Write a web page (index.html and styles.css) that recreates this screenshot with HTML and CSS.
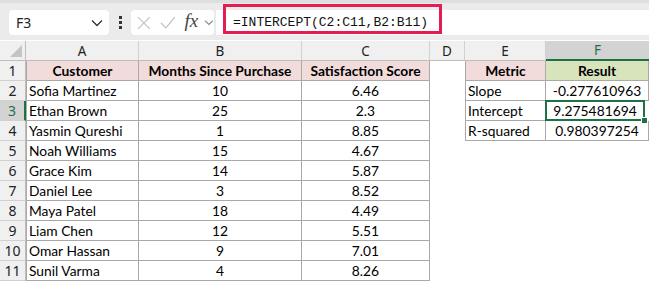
FILE: index.html
```html
<!DOCTYPE html>
<html lang="en">
<head>
    <meta charset="UTF-8">
    <title>INTERCEPT</title>
    <link rel="stylesheet" href="styles.css">
</head>
<body>
    <div class="toolbar">
        <div class="namebox">
            <span>F3</span>
            <svg class="chev" width="12" height="8" viewBox="0 0 12 8"><path d="M1 1.5 L6 6.5 L11 1.5" fill="none" stroke="#333" stroke-width="1.3"/></svg>
        </div>
        <div class="dots"><i></i><i></i><i></i></div>
        <div class="fxbox">
            <svg width="14" height="14" viewBox="0 0 14 14"><path d="M1 1 L13 13 M13 1 L1 13" stroke="#c2c2c2" stroke-width="1.2"/></svg>
            <svg width="16" height="14" viewBox="0 0 16 14"><path d="M1 7 L6 12 L15 1" fill="none" stroke="#c2c2c2" stroke-width="1.2"/></svg>
            <span class="fx">fx</span>
            <svg class="small" width="10" height="7" viewBox="0 0 10 7"><path d="M1 1.5 L5 5.5 L9 1.5" fill="none" stroke="#888" stroke-width="1.1"/></svg>
        </div>
        <div class="formula">
            <span>=INTERCEPT(C2:C11,B2:B11)</span>
            <div class="mark"></div>
        </div>
    </div>

    <div class="sheet">
        <div class="corner"><div class="tri"></div></div>
        <div class="colhead">A</div>
        <div class="colhead">B</div>
        <div class="colhead">C</div>
        <div class="colhead">D</div>
        <div class="colhead">E</div>
        <div class="colhead active">F</div>

        <div class="rowhead">1</div>
        <div class="cell head first">Customer</div>
        <div class="cell head">Months Since Purchase</div>
        <div class="cell head">Satisfaction Score</div>
        <div class="cell blank"></div>
        <div class="cell head first">Metric</div>
        <div class="cell head green">Result</div>

        <div class="rowhead">2</div>
        <div class="cell first left">Sofia Martinez</div>
        <div class="cell">10</div>
        <div class="cell">6.46</div>
        <div class="cell blank"></div>
        <div class="cell first left">Slope</div>
        <div class="cell">-0.277610963</div>

        <div class="rowhead active">3</div>
        <div class="cell first left">Ethan Brown</div>
        <div class="cell">25</div>
        <div class="cell">2.3</div>
        <div class="cell blank"></div>
        <div class="cell first left">Intercept</div>
        <div class="cell selected">9.275481694<span class="handle"></span></div>

        <div class="rowhead">4</div>
        <div class="cell first left">Yasmin Qureshi</div>
        <div class="cell">1</div>
        <div class="cell">8.85</div>
        <div class="cell blank"></div>
        <div class="cell first left">R-squared</div>
        <div class="cell">0.980397254</div>

        <div class="rowhead">5</div>
        <div class="cell first left">Noah Williams</div>
        <div class="cell">15</div>
        <div class="cell">4.67</div>
        <div class="cell blank wide"></div>

        <div class="rowhead">6</div>
        <div class="cell first left">Grace Kim</div>
        <div class="cell">14</div>
        <div class="cell">5.87</div>
        <div class="cell blank wide"></div>

        <div class="rowhead">7</div>
        <div class="cell first left">Daniel Lee</div>
        <div class="cell">3</div>
        <div class="cell">8.52</div>
        <div class="cell blank wide"></div>

        <div class="rowhead">8</div>
        <div class="cell first left">Maya Patel</div>
        <div class="cell">18</div>
        <div class="cell">4.49</div>
        <div class="cell blank wide"></div>

        <div class="rowhead">9</div>
        <div class="cell first left">Liam Chen</div>
        <div class="cell">12</div>
        <div class="cell">5.51</div>
        <div class="cell blank wide"></div>

        <div class="rowhead">10</div>
        <div class="cell first left">Omar Hassan</div>
        <div class="cell">9</div>
        <div class="cell">7.01</div>
        <div class="cell blank wide"></div>

        <div class="rowhead">11</div>
        <div class="cell first left">Sunil Varma</div>
        <div class="cell">4</div>
        <div class="cell">8.26</div>
        <div class="cell blank wide"></div>
    </div>
</body>
</html>
```

FILE: styles.css
```css
* {
    box-sizing: border-box;
}
body {
    margin: 0;
    background-color: #fff;
    font-family: Lato, "Liberation Sans", sans-serif;
    overflow: hidden;
}
.toolbar {
    height: 40px;
    background-color: #ebebeb;
    border-top: 3px solid #dedede;
    display: flex;
    align-items: center;
    padding-left: 9px;
}
.namebox {
    width: 100px;
    height: 25px;
    margin-top: 2px;
    background-color: #fff;
    border-radius: 4px;
    display: flex;
    align-items: center;
    justify-content: space-between;
    padding: 0 6px 0 7px;
    font-family: "Noto Sans", sans-serif;
    font-size: 14px;
    color: #222;
}
.dots {
    width: 22px;
    display: flex;
    flex-direction: column;
    align-items: center;
    gap: 2px;
    margin-top: 2px;
}
.dots i {
    width: 3px;
    height: 3px;
    background-color: #333;
}
.fxbox {
    width: 83px;
    height: 25px;
    margin-top: 2px;
    background-color: #fff;
    border-radius: 4px;
    display: flex;
    align-items: center;
    gap: 9px;
    padding-left: 6px;
}
.fxbox .small {
    margin-left: -3px;
}
.fx {
    font-family: "Liberation Serif", serif;
    font-style: italic;
    font-size: 19px;
    color: #444;
    margin-top: -3px;
}
.formula {
    flex: 1;
    height: 25px;
    margin-top: 2px;
    margin-left: 2px;
    background-color: #fff;
    position: relative;
    display: flex;
    align-items: center;
    padding-left: 17px;
    font-family: "Liberation Mono", monospace;
    font-size: 13px;
    color: #111;
}
.mark {
    position: absolute;
    left: 7px;
    top: -6px;
    width: 219px;
    height: 30px;
    border: 3px solid #e31c51;
}
.sheet {
    display: grid;
    grid-template-columns: 26px 113px 163px 128px 35px 81px 103px;
    grid-template-rows: 20px repeat(11, 20px);
    margin-top: 1px;
    font-size: 13.8px;
    color: #000;
}
.corner {
    background-color: #f0f0f0;
    border-right: 1px solid #bdbdbd;
    border-bottom: 1px solid #bdbdbd;
    position: relative;
}
.tri {
    position: absolute;
    right: 3px;
    bottom: 3px;
    width: 0;
    height: 0;
    border-left: 12px solid transparent;
    border-bottom: 12px solid #c4c4c4;
}
.colhead {
    background-color: #f0f0f0;
    border-right: 1px solid #d0d0d0;
    border-bottom: 1px solid #bdbdbd;
    display: flex;
    align-items: center;
    justify-content: center;
    font-family: "Noto Sans", sans-serif;
    font-size: 13.5px;
    color: #222;
}
.colhead.active {
    background-color: #d3d3d3;
    border-right: none;
    border-bottom: 2px solid #1e7145;
    color: #1e7145;
}
.rowhead {
    background-color: #f0f0f0;
    border-right: 1px solid #bdbdbd;
    border-bottom: 1px solid #d0d0d0;
    display: flex;
    align-items: center;
    justify-content: center;
    font-family: "Noto Sans", sans-serif;
    font-size: 14px;
    color: #222;
}
.rowhead.active {
    background-color: #d3d3d3;
    border-right: 2px solid #1e7145;
    color: #1e7145;
}
.cell {
    border-right: 1px solid #a9a9a9;
    border-bottom: 1px solid #a9a9a9;
    display: flex;
    align-items: center;
    justify-content: center;
    white-space: nowrap;
    position: relative;
}
.cell.first {
    border-left: 1px solid #a9a9a9;
}
.cell.left {
    justify-content: flex-start;
    padding-left: 2px;
}
.cell.head {
    background-color: #f2dcdb;
    font-weight: bold;
}
.cell.head.green {
    background-color: #d8e4bc;
}
.cell.blank {
    border: none;
}
.cell.wide {
    grid-column: span 3;
}
.cell.selected {
    border: 2px solid #1e7145;
    margin: -1px 4px 0 -1px;
}
.handle {
    position: absolute;
    right: -5px;
    bottom: -5px;
    width: 7px;
    height: 7px;
    background-color: #1e7145;
    border: 1px solid #fff;
}
```
